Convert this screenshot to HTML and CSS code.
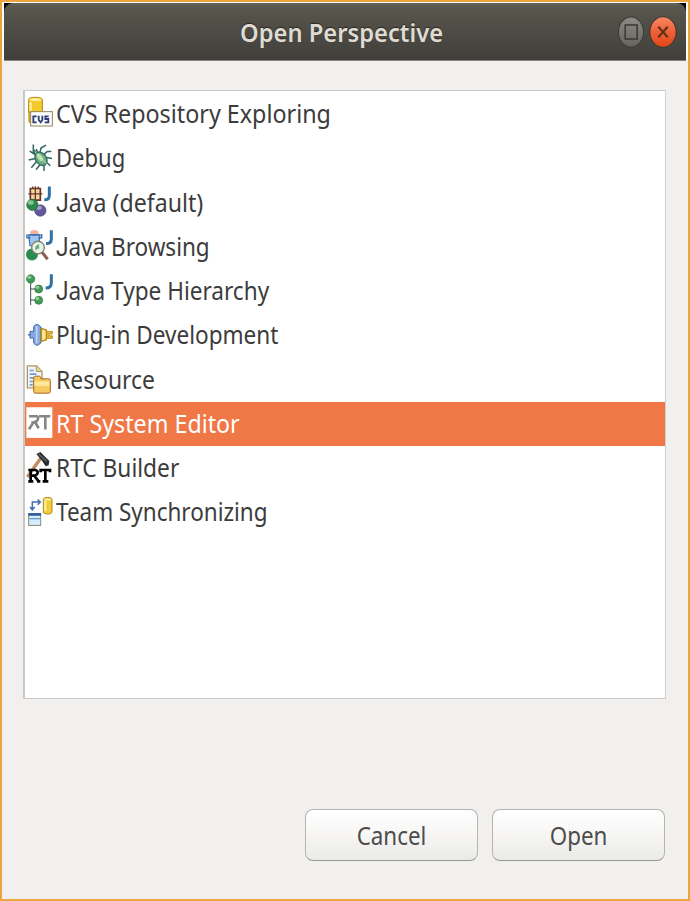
FILE: index.html
```html
<!DOCTYPE html>
<html lang="en">
<head>
<meta charset="utf-8">
<title>Open Perspective</title>
<link rel="stylesheet" href="styles.css">
</head>
<body>
<main class="dialog">
  <header class="titlebar">
    <h1 class="title"><span class="text">Open Perspective</span></h1>
    <div class="controls">
      <svg width="26" height="34" viewBox="0 0 26 34"><defs><linearGradient id="gr" x2="0" y2="1"><stop offset="0" stop-color="#8b8a83"/><stop offset="1" stop-color="#65645e"/></linearGradient></defs><ellipse cx="13" cy="17" rx="13" ry="15.7" fill="#3d3c37"/><ellipse cx="13" cy="17" rx="12" ry="14.5" fill="url(#gr)"/><rect x="7.2" y="10" width="12" height="14" fill="none" stroke="#3c3b37" stroke-width="1.6"/></svg>
      <svg width="28" height="34" viewBox="0 0 28 34"><defs><linearGradient id="or" x2="0" y2="1"><stop offset="0" stop-color="#f78660"/><stop offset=".5" stop-color="#ef6037"/><stop offset="1" stop-color="#df4717"/></linearGradient></defs><ellipse cx="14" cy="17" rx="13.8" ry="15.8" fill="#44382f"/><ellipse cx="14" cy="17" rx="12.6" ry="14.7" fill="url(#or)"/><path d="M9.3 11.8 18.7 22.2M18.7 11.8 9.3 22.2" stroke="#61301a" stroke-width="2.1"/></svg>
    </div>
  </header>
  <ul class="list">
    <li class="row">
      <svg class="icon" viewBox="15 6 93 132.75"><path d="M26 29Q26 22 46 22T67 29V68H26z" fill="#f4c92e" stroke="#b7820e" stroke-width="3"/><path d="M32 37V62" stroke="#fff0a0" stroke-width="7"/><ellipse cx="46" cy="29" rx="18" ry="5" fill="#fff09a"/><path d="M27 66v30q3 4 10 3" fill="#e8b71e" stroke="#b7820e" stroke-width="3"/><rect x="32" y="65" width="65" height="43" fill="#fff" stroke="#8d8558" stroke-width="3"/><path d="M50 79H40V97H50M56 77V90L62 97 67 90V77M86 79H76V87H85V97H74" fill="none" stroke="#2b3c77" stroke-width="5.5"/></svg>
      <span class="text cvs">CVS Repository Exploring</span></li>
    <li class="row">
      <svg class="icon" viewBox="15 138.75 93 132.75"><g fill="none" stroke="#326663" stroke-width="4.5"><path d="M47 193 40 186V164M60 188 63 175 78 166M72 194 82 185H94M80 203 96 206M81 219 91 228M72 226V244M60 225 48 240M49 216 34 234M46 206 26 211M47 195 29 184"/><path d="M47 186 41 180M52 187 49 178"/></g><ellipse cx="63" cy="207" rx="16" ry="22" transform="rotate(-36 63 207)" fill="#6fae7e" stroke="#316a62" stroke-width="4"/><ellipse cx="60" cy="203" rx="7" ry="13" transform="rotate(-36 60 203)" fill="#b9ddb0"/><path d="M49 191 80 222" stroke="#e0efd0" stroke-width="2"/></svg>
      <span class="text debug">Debug</span></li>
    <li class="row">
      <svg class="icon" viewBox="15 1.5 93 132.75"><path d="M31 24H61V59H31z" fill="#f4d59b" stroke="#6a3429" stroke-width="5"/><path d="M25 40H67M46 17V62M38 18V24M55 18V24" stroke="#6a3429" stroke-width="4"/><path d="M88 18V44Q88 58 73 58" fill="none" stroke="#2f70a5" stroke-width="9"/><circle cx="61" cy="90" r="17" fill="#65579d" stroke="#463d79" stroke-width="2"/><ellipse cx="56" cy="82" rx="9" ry="6" fill="#aaa2ce"/><circle cx="37" cy="73" r="17" fill="#2c874c" stroke="#236540" stroke-width="2"/><ellipse cx="32" cy="66" rx="9" ry="7" fill="#89c596"/></svg>
      <span class="text javad"><span class="cap">J</span>ava (default)</span></li>
    <li class="row">
      <svg class="icon" viewBox="15 134.25 93 132.75"><circle cx="36" cy="223" r="18" fill="#2c8b4f"/><ellipse cx="43" cy="157" rx="13" ry="8" fill="#f8b39d"/><path d="M26 164H60L56 196H30z" fill="#9cc7f2" stroke="#4c78b9" stroke-width="4"/><path d="M21 162V173H31M65 161V173H55M28 164H60" fill="none" stroke="#3467b0" stroke-width="4"/><path d="M94 150V176Q94 190 78 190" fill="none" stroke="#2f70a5" stroke-width="9"/><path d="M66 216 83 237" stroke="#8b604f" stroke-width="9"/><circle cx="54" cy="202" r="19" fill="#e7f3eb" stroke="#7e8167" stroke-width="4"/><path d="M47 211Q42 194 58 192 56 198 58 205 52 204 47 211" fill="#63ac76"/></svg>
      <span class="text javab"><span class="cap">J</span>ava Browsing</span></li>
    <li class="row">
      <svg class="icon" viewBox="15 -3 93 132.75"><path d="M32 31V105M32 57H48M32 90H48" stroke="#444c58" stroke-width="3"/><g fill="#3f9b55" stroke="#2d7543" stroke-width="2"><circle cx="32" cy="27" r="12.5"/><circle cx="56" cy="57" r="12"/><circle cx="56" cy="91" r="12"/></g><g fill="#91cd98"><ellipse cx="28" cy="22" rx="6" ry="5"/><ellipse cx="52" cy="52" rx="6" ry="5"/><ellipse cx="52" cy="86" rx="6" ry="5"/></g><path d="M94 13V38Q94 54 77 54" fill="none" stroke="#2f70a5" stroke-width="9"/></svg>
      <span class="text javat"><span class="cap">J</span>ava Type Hierarchy</span></li>
    <li class="row">
      <svg class="icon" viewBox="15 129.75 93 132.75"><path d="M24 195H35M83 188H98M83 202H98" stroke="#4671b1" stroke-width="4"/><path d="M30 185H41V170Q45 164 53 164L63 172V219L53 227Q45 226 41 220V205H30z" fill="#85a8df" stroke="#3c68ac" stroke-width="3"/><path d="M50 169V221" stroke="#c2d4f2" stroke-width="5"/><path d="M64 176 79 181V210L64 215z" fill="#ffe68c" stroke="#ba8915" stroke-width="4"/><path d="M80 185H97V193H87V198H97V206H80z" fill="#e4b637" stroke="#ae8012" stroke-width="2"/></svg>
      <span class="text plug">Plug-in Development</span></li>
    <li class="row">
      <svg class="icon" viewBox="15 7.5 93 132.75"><path d="M22 31H50L66 48V97H22z" fill="#edf4fc" stroke="#ae985a" stroke-width="4"/><path d="M49 31V48H66" fill="#e7d49b" stroke="#ae985a" stroke-width="3"/><path d="M29 45H41M29 56H49M29 67H42M29 78H39M29 88H38" stroke="#789cc9" stroke-width="5"/><path d="M41 74V66Q42 62 46 62H58Q62 62 63 70H87Q91 71 91 75V109Q90 113 86 113H46Q41 113 41 108z" fill="#f7ca60" stroke="#a56921" stroke-width="3"/><path d="M44 78H88V91H44z" fill="#ffe9a0"/></svg>
      <span class="text res">Resource</span></li>
    <li class="row selected">
      <svg class="icon" viewBox="15 140.25 93 132.75"><path d="M19 156H97V248H19z" fill="#fff"/><g fill="none" stroke="#868686" stroke-width="8"><path d="M27 183H51Q58 188 50 198L34 203M27 222 40 202M46 202 56 219M57 183H91M76 183V223"/></g></svg>
      <span class="text rts">RT System Editor</span></li>
    <li class="row">
      <svg class="icon" viewBox="15 3 93 132.75"><path d="M62 40 22 96" stroke="#c28c60" stroke-width="10"/><path d="M49 27 61 21 88 48 86 61 77 64 66 47z" fill="#292a2c"/><path d="M55 26 80 49" stroke="#66686b" stroke-width="4"/><g fill="none" stroke="#000" stroke-width="8"><path d="M32 76V109M25 75H46Q57 78 51 88 47 92 36 92M43 92 56 109M25 109H40M51 109H61"/><path d="M62 82V75H90V82M76 75V109M68 109H85"/></g></svg>
      <span class="text rtc">RTC Builder</span></li>
    <li class="row">
      <svg class="icon" viewBox="15 135.75 93 132.75"><path d="M37 192V172H59M30 187 37 195 44 187M53 164 61 172 53 180" fill="none" stroke="#416db0" stroke-width="4.5"/><path d="M70 164Q70 158 83 158T96 164V202Q96 208 83 208T70 202z" fill="#f1cc3c" stroke="#b58b19" stroke-width="3"/><path d="M76 169V199" stroke="#fff3a0" stroke-width="6"/><ellipse cx="83" cy="164" rx="11" ry="3" fill="#fff0a1"/><rect x="26" y="207" width="36" height="35" fill="#d2edff" stroke="#8b8b69" stroke-width="3"/><path d="M25 209H63" stroke="#315b9d" stroke-width="8"/><path d="M28 222H60" stroke="#477cb9" stroke-width="3"/></svg>
      <span class="text team">Team Synchronizing</span></li>
  </ul>
  <footer class="actions">
    <button class="button"><span class="text cancel">Cancel</span></button>
    <button class="button"><span class="text open">Open</span></button>
  </footer>
</main>
</body>
</html>
```
FILE: styles.css
```css
* { box-sizing: border-box; }
body { margin: 0; font: 26px/43px "Noto Sans", sans-serif; color: #3c3c3c; }
.dialog { position: relative; z-index: 0; width: 690px; height: 901px; border: 2px solid #eba53c; padding: 1px 2px 0; background: linear-gradient(#fff 58px, #f1f0ee 58px); display: flex; flex-direction: column; }
.titlebar { height: 58px; flex: none; display: grid; grid-template-columns: 1fr auto 1fr; align-items: center; background: linear-gradient(#65635a, #59564d 4px, #403f3a); border-bottom: 1px solid #88867f; border-radius: 9px 9px 0 0; position: relative; }
.titlebar::before { content: ""; position: absolute; inset: 0; z-index: -1; background: #000; }
.title { grid-column: 2; margin: 0; width: 210px; font-size: 25px; line-height: 56px; font-weight: 600; color: #dfdbd2; text-shadow: 0 -1px 1px #292825; }
.controls { justify-self: end; display: flex; gap: 5px; margin-right: 9px; }
.text { display: inline-block; white-space: nowrap; transform: scaleX(var(--condense, .86)); transform-origin: 0 50%; }
.title .text { --condense: .949; }
.cvs { --condense: .896; }
.debug { --condense: .848; }
.javad { --condense: .89; }
.javab { --condense: .866; }
.javat { --condense: .868; }
.plug { --condense: .868; }
.res { --condense: .88; }
.rts { --condense: .894; }
.rtc { --condense: .874; }
.team { --condense: .864; }
.cap { font-family: Roboto, sans-serif; line-height: 1; }
.list { list-style: none; width: 643px; height: 609px; margin: 29px 0 0 19px; padding: 0; border: 2px solid #c9c8c6; border-right-color: #d2d1ce; border-width: 1.5px 1px 1.5px 2px; padding-top: 1px; background: #fff; flex: none; }
.row { height: 44.25px; display: flex; align-items: center; }
.row .text { margin-top: -1px; }
.selected { background: #f07746; color: #fff; }
.icon { width: 31px; height: 44.25px; flex: none; }
.actions { margin: 110px 21px 0 auto; display: flex; gap: 14px; }
.button { width: 173px; height: 52px; padding: 0; border: 1.5px solid #b5b4b1; border-bottom-color: #999896; border-radius: 8px; background: linear-gradient(#fff, #f7f6f5 50%, #eaeae8); font: inherit; color: #4c4c4c; line-height: 48px; }
.button .text { transform-origin: 50% 50%; }
```
